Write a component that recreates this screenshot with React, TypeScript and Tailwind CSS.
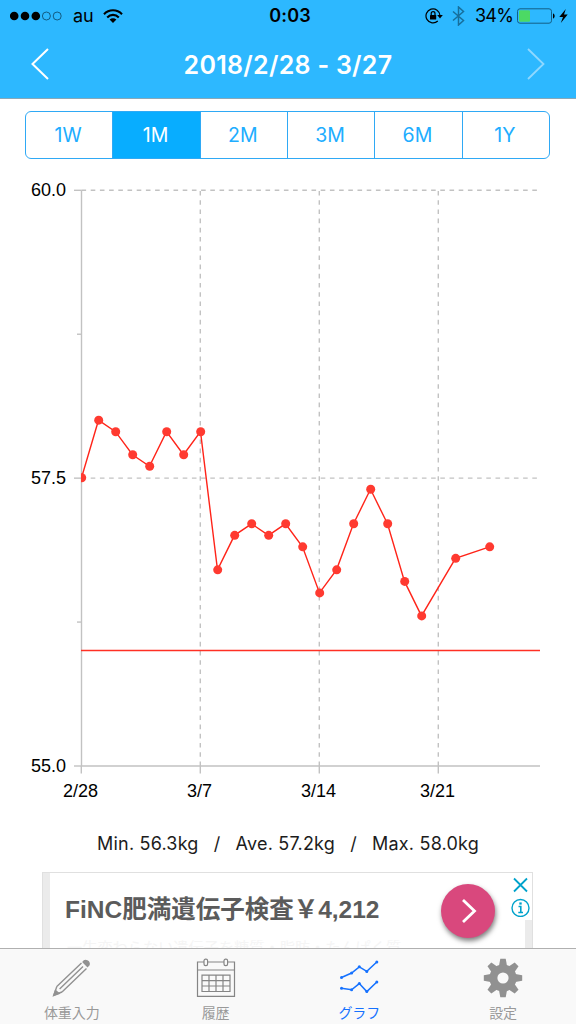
import type { ReactNode } from "react";

const DAY_WIDTH = 17;
const CHART_LEFT = 81.5;
const CHART_TOP = 190.3;
const CHART_RIGHT = 540;
const CHART_BOTTOM = 766;

const ranges = ["1W", "1M", "2M", "3M", "6M", "1Y"];

// [day offset from 2/28, weight in kg]
const weights: [number, number][] = [
  [0, 57.5],
  [1, 58.0],
  [2, 57.9],
  [3, 57.7],
  [4, 57.6],
  [5, 57.9],
  [6, 57.7],
  [7, 57.9],
  [8, 56.7],
  [9, 57.0],
  [10, 57.1],
  [11, 57.0],
  [12, 57.1],
  [13, 56.9],
  [14, 56.5],
  [15, 56.7],
  [16, 57.1],
  [17, 57.4],
  [18, 57.1],
  [19, 56.6],
  [20, 56.3],
  [22, 56.8],
  [24, 56.9],
];

const GOAL = 56;

const weeks = [
  { day: 0, label: "2/28" },
  { day: 7, label: "3/7" },
  { day: 14, label: "3/14" },
  { day: 21, label: "3/21" },
];

const toX = (day: number) => CHART_LEFT + day * DAY_WIDTH;
const toY = (kg: number) =>
  CHART_TOP + ((60 - kg) / 5) * (CHART_BOTTOM - CHART_TOP);

function StatusBar() {
  return (
    <div className="relative flex h-[31px] items-center justify-between pl-[10px] pr-[8px] text-[18px] text-black">
      <div className="flex items-center">
        <svg width="53" height="10" viewBox="0 0 53 10">
          <circle cx="4.2" cy="5" r="4.3" />
          <circle cx="15" cy="5" r="4.3" />
          <circle cx="25.8" cy="5" r="4.3" />
          <circle cx="36.4" cy="5" r="4" fill="none" stroke="#0b4463" strokeWidth="0.8" />
          <circle cx="47.2" cy="5" r="4" fill="none" stroke="#0b4463" strokeWidth="0.8" />
        </svg>
        <span className="ml-[10px] w-[21px]">au</span>
        <svg className="ml-[9px]" width="20" height="14" viewBox="0 0 20 14">
          <g fill="none" stroke="#000" strokeWidth="2.1">
            <path d="M1 5.2C6 0 14 0 19 5.2" />
            <path d="M4.2 8.4C7.5 5 12.5 5 15.8 8.4" />
          </g>
          <path d="M6.6 10.5C8.6 8.7 11.4 8.7 13.4 10.5L10 14Z" />
        </svg>
      </div>
      <span className="absolute left-0 w-full pl-1 text-center font-semibold tracking-[0.2px]">
        0:03
      </span>
      <div className="flex items-center">
        <svg width="19" height="16" viewBox="0 0 19 16">
          <path
            d="M12.8 13A7 7 0 1 1 15 7.5"
            fill="none"
            stroke="#000"
            strokeWidth="1.2"
          />
          <path d="M12.2 7h5.6l-2.8 3.4Z" />
          <rect x="5" y="7" width="6.2" height="4.5" rx="0.5" />
          <path d="M6.2 7V5.5a1.9 1.9 0 0 1 3.8 0V7" fill="none" stroke="#000" strokeWidth="1.2" />
        </svg>
        <svg className="ml-[8px]" width="13" height="20" viewBox="0 0 13 20">
          <path
            d="M1 5.5L11.5 14.5L6.5 19V1L11.5 5.5L1 14.5"
            fill="none"
            stroke="#176f9c"
            strokeWidth="1.5"
          />
        </svg>
        <span className="ml-[10px] w-[37px] whitespace-nowrap tracking-[-0.8px]">34%</span>
        <svg className="ml-[5px]" width="38" height="16" viewBox="0 0 38 16">
          <rect x="0.5" y="0.8" width="34" height="14.4" rx="2.5" fill="none" stroke="#135f86" />
          <rect x="2" y="2.3" width="11" height="11.4" rx="1" fill="#4cd964" />
          <path d="M36 5.5c2.2 0.5 2.2 4.5 0 5Z" />
        </svg>
        <svg className="ml-[4px]" width="9" height="14" viewBox="0 0 9 14">
          <path d="M6.8 0L0.3 8H4L1.8 14L8.7 5.5H5Z" />
        </svg>
      </div>
    </div>
  );
}

function Header() {
  return (
    <header className="h-[99px] border-b border-[#8aa8b8] bg-[#2db8ff]">
      <StatusBar />
      <div className="flex h-[65px] items-center justify-between px-[31px]">
        <svg width="18" height="32" viewBox="0 0 18 32" fill="none">
          <path d="M17 1L1.5 16L17 31" stroke="#fff" strokeWidth="2" />
        </svg>
        <h1 className="pt-[4px] text-[25px] font-semibold tracking-[0.28px] text-white">
          2018/2/28 - 3/27
        </h1>
        <svg width="18" height="32" viewBox="0 0 18 32" fill="none">
          <path d="M1 1L16.5 16L1 31" stroke="#8fd8ff" strokeWidth="1.8" />
        </svg>
      </div>
    </header>
  );
}

function RangePicker() {
  return (
    <div className="ml-[25px] mt-[12px] flex h-[48px] w-[525px] divide-x divide-[#2fa9f5] overflow-hidden rounded-[6px] border border-[#2fa9f5]">
      {ranges.map((range) => (
        <button
          key={range}
          className={`flex-1 pr-[2px] pt-px text-[19.5px] ${
            range === "1M" ? "bg-[#08adff] text-white" : "text-[#20adff]"
          }`}
        >
          {range}
        </button>
      ))}
    </div>
  );
}

function WeightChart() {
  return (
    <svg
      className="block font-['Liberation_Sans',sans-serif]"
      width="576"
      height="649"
      viewBox="0 159 576 649"
      fill="none"
    >
      <defs>
        <clipPath id="plot">
          <rect x="81" y="180" width="460" height="590" />
        </clipPath>
      </defs>
      <g stroke="#c2c2c2" strokeWidth="1.4">
        {[60, 57.5].map((kg) => (
          <path
            key={kg}
            d={`M${CHART_LEFT} ${toY(kg)}H${CHART_RIGHT}`}
            strokeDasharray="4.6 4.6"
          />
        ))}
        {weeks.slice(1).map((week) => (
          <path
            key={week.day}
            d={`M${toX(week.day) - 0.2} ${CHART_BOTTOM}V${CHART_TOP}`}
            strokeDasharray="4.6 4.6"
          />
        ))}
        {[60, 57.5, 55].map((kg) => (
          <path key={kg} d={`M74 ${toY(kg)}H81.5`} />
        ))}
        {[58.75, 56.25].map((kg) => (
          <path key={kg} d={`M77 ${toY(kg)}H81.5`} />
        ))}
        {weeks.map((week) => (
          <path key={week.day} d={`M${toX(week.day) - 0.2} 766V773.5`} />
        ))}
        <path d={`M${CHART_LEFT} ${CHART_TOP}V${CHART_BOTTOM}H${CHART_RIGHT}`} />
      </g>
      <g clipPath="url(#plot)">
        <path d={`M81 ${toY(GOAL) - 0.3}H${CHART_RIGHT}`} stroke="#ff3024" strokeWidth="1.6" />
        <polyline
          points={weights.map(([day, kg]) => `${toX(day)},${toY(kg) - 0.4}`).join(" ")}
          stroke="#ff2419"
          strokeWidth="1.4"
        />
        {weights.map(([day, kg]) => (
          <circle key={day} cx={toX(day) + 0.2} cy={toY(kg) - 0.4} r="4.5" fill="#ff3a30" />
        ))}
      </g>
      <g fill="#000" fontSize="18">
        {[60, 57.5, 55].map((kg) => (
          <text key={kg} x="66" y={toY(kg) + 6} textAnchor="end">
            {kg.toFixed(1)}
          </text>
        ))}
        {weeks.map((week) => (
          <text key={week.day} x={toX(week.day) - 1} y="796.5" textAnchor="middle">
            {week.label}
          </text>
        ))}
      </g>
    </svg>
  );
}

function Summary() {
  return (
    <div className="flex h-[64px] items-center justify-center pt-[7px] text-[18px] tracking-[0.2px] text-[#1c1c1c]">
      <span>Min. 56.3kg</span>
      <span className="w-[37px] text-center">/</span>
      <span>Ave. 57.2kg</span>
      <span className="w-[37px] text-center">/</span>
      <span>Max. 58.0kg</span>
    </div>
  );
}

function AdBanner() {
  return (
    <div className="relative ml-[42px] h-[76px] w-[491px] overflow-hidden border border-b-0 border-[#e0e0e0] bg-white">
      <div className="absolute inset-y-0 left-0 w-[7px] bg-[#ebebeb]" />
      <div className="absolute bottom-0 right-0 top-[47px] w-[7px] bg-[#ebebeb]" />
      <p className="ml-[22px] mt-[18px] whitespace-nowrap font-['Liberation_Sans','Noto_Sans_CJK_JP',sans-serif] text-[24.5px] font-bold leading-[38px] text-[#5b5b5b]">
        FiNC肥満遺伝子検査￥4,212
      </p>
      <p className="ml-[24px] mt-[7px] whitespace-nowrap font-['Noto_Sans_CJK_JP',sans-serif] text-[15.2px] leading-[20px] text-[#f5f5f5]">
        一生変わらない遺伝子を糖質・脂肪・たんぱく質
      </p>
      <div className="absolute left-[398px] top-[11px] flex size-[54px] items-center justify-center rounded-full bg-[#d9487d] shadow-[1px_3px_5px_rgba(0,0,0,0.5)]">
        <svg className="ml-[2px]" width="16" height="26" viewBox="0 0 16 26" fill="none">
          <path d="M2 2L13.5 13L2 24" stroke="#fff" strokeWidth="2.8" />
        </svg>
      </div>
      <svg className="absolute left-[468px] top-[4px]" width="19" height="40" viewBox="0 0 19 40" fill="none" stroke="#00a2cb">
        <path d="M3 1.5L16 14.5M16 1.5L3 14.5" strokeWidth="1.8" />
        <circle cx="9.5" cy="31" r="8.5" strokeWidth="1.4" />
        <path d="M7.5 29.5H9.8V35M7.3 35.5H12" strokeWidth="1.6" />
        <path d="M8.3 26.5H10.7" strokeWidth="2.2" />
      </svg>
    </div>
  );
}

function PencilIcon() {
  return (
    <svg width="40" height="40" viewBox="0 0 40 40" fill="none" stroke="#929292" strokeWidth="1.4">
      <path d="M4.8 28.5L29.5 5M10 34L34.5 10.5M7.6 31L31 8.4M4.8 28.5L2 37L10 34" />
      <path d="M3.4 32.5L1.6 37.6L7 35.6Z" fill="#929292" />
      <path d="M31 4C33 .8 38 3 37 7L35.5 8.6Z" fill="#929292" />
    </svg>
  );
}

function CalendarIcon() {
  return (
    <svg width="40" height="40" viewBox="0 0 40 40" fill="none" stroke="#858585" strokeWidth="1.2">
      <path d="M8 4H1.5V38.3H38.5V4H31.5M12 4H28M1.5 12H38.5" />
      <rect x="8" y="1.2" width="3.6" height="6.4" rx="1.6" />
      <rect x="28" y="1.2" width="3.6" height="6.4" rx="1.6" />
      <path d="M6 17.2H34V33.5H6ZM6 22.6H34M6 28H34M13 17.2V33.5M20 17.2V33.5M27 17.2V33.5" />
    </svg>
  );
}

const graphLines: [number, number][][] = [
  [[2.5, 19.5], [12.6, 15], [20.3, 8.8], [27.8, 13.4], [37.8, 4]],
  [[2.5, 30.2], [12.6, 31.8], [20.3, 25.6], [27.8, 33.6], [37.8, 24]],
];

function GraphIcon() {
  return (
    <svg width="40" height="40" viewBox="0 0 40 40" fill="none">
      {graphLines.map((line, i) => (
        <g key={i}>
          <polyline points={line.join(" ")} stroke="#1672ff" strokeWidth="1.5" />
          {line.map(([x, y]) => (
            <circle key={x} cx={x} cy={y} r="1.5" fill="#1672ff" />
          ))}
        </g>
      ))}
    </svg>
  );
}

function GearIcon() {
  return (
    <svg width="40" height="40" viewBox="0 0 40 40" fill="#919191">
      {[0, 45, 90, 135, 180, 225, 270, 315].map((angle) => (
        <path key={angle} d="M17.3 0.8H22.7L24.2 9H15.8Z" transform={`rotate(${angle} 20 20)`} />
      ))}
      <circle cx="20" cy="20" r="13.6" />
      <circle cx="20" cy="20" r="5.6" fill="#f9f9f9" />
    </svg>
  );
}

function Tab({
  label,
  active,
  children,
}: {
  label: string;
  active?: boolean;
  children: ReactNode;
}) {
  return (
    <button
      className={`flex flex-1 flex-col items-center pt-[9px] font-['Noto_Sans_CJK_JP',sans-serif] text-[14px] leading-[20px] ${
        active ? "text-[#1672ff]" : "text-[#999]"
      }`}
    >
      {children}
      <span className="mt-[4px]">{label}</span>
    </button>
  );
}

export default function App() {
  return (
    <div className="flex h-[1024px] w-[576px] flex-col overflow-hidden bg-white font-[Inter,sans-serif]">
      <Header />
      <RangePicker />
      <WeightChart />
      <Summary />
      <AdBanner />
      <nav className="flex h-[76px] border-t border-[#b0b0b0] bg-[#f9f9f9] pr-px">
        <Tab label="体重入力">
          <PencilIcon />
        </Tab>
        <Tab label="履歴">
          <CalendarIcon />
        </Tab>
        <Tab label="グラフ" active>
          <GraphIcon />
        </Tab>
        <Tab label="設定">
          <GearIcon />
        </Tab>
      </nav>
    </div>
  );
}
